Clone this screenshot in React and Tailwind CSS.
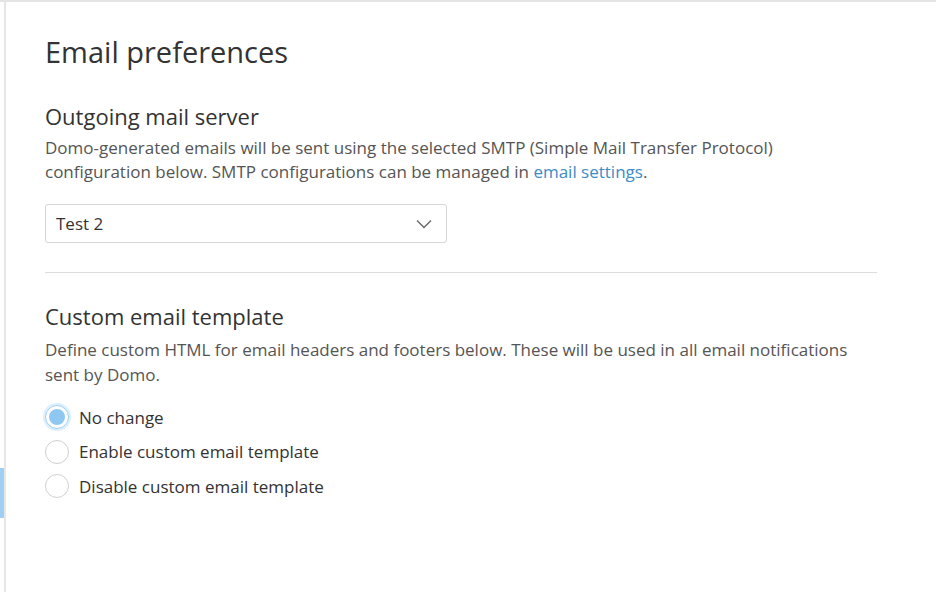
import React, { useState } from "react";

const options = [
  { id: "none", label: "No change" },
  { id: "enable", label: "Enable custom email template" },
  { id: "disable", label: "Disable custom email template" },
];

const Radio = ({ checked, label, onSelect }) => (
  <label
    className="flex items-center gap-[10px] h-[34.5px] cursor-pointer"
    onClick={onSelect}
  >
    {checked ? (
      <span className="w-[24px] h-[24px] rounded-full border border-[#9fd0f3] bg-white shadow-[0_0_0_2px_#dcefff] flex items-center justify-center">
        <span className="w-[16px] h-[16px] rounded-full bg-[#8ec8f0]" />
      </span>
    ) : (
      <span className="w-[24px] h-[24px] rounded-full border border-[#cfcfcf] bg-white" />
    )}
    <span className="text-[17px] text-[#333]">{label}</span>
  </label>
);

export default function App() {
  const [choice, setChoice] = useState("none");

  return (
    <div
      className="w-[936px] h-[592px] bg-white flex border-t-2 border-[#e4e4e4] overflow-hidden"
      style={{ fontFamily: '"Open Sans", sans-serif' }}
    >
      {/* left rail with active marker */}
      <div className="w-[4px] flex flex-col">
        <div className="h-[466px]" />
        <div className="h-[50px] bg-[#9fd0f3]" />
      </div>
      <div className="flex-1 border-l-2 border-[#e6e6e6] pl-[39px] pt-[31px]">
        <h1 className="text-[29px] leading-[38px] text-[#333]">Email preferences</h1>

        <h2 className="mt-[30px] text-[22px] leading-[30px] text-[#333]">
          Outgoing mail server
        </h2>
        <p className="mt-[5px] text-[17px] leading-[24px] text-[#555] w-[800px]">
          Domo-generated emails will be sent using the selected SMTP (Simple Mail Transfer
          Protocol) configuration below. SMTP configurations can be managed in{" "}
          <span className="text-[#3d8bc7] cursor-pointer">email settings</span>.
        </p>

        <button className="mt-[20px] w-[402px] h-[39px] border border-[#d6d6d6] rounded-[3px] flex items-center justify-between pl-[10px] pr-[14px] text-[17px] text-[#333]">
          <span>Test 2</span>
          <svg width="16" height="10" viewBox="0 0 16 10" fill="none">
            <path d="M1 1.5l7 7 7-7" stroke="#666" strokeWidth="1.3" />
          </svg>
        </button>

        <div className="mt-[29px] w-[832px] border-t border-[#dcdcdc]" />

        <h2 className="mt-[28px] text-[22px] leading-[30px] text-[#333]">
          Custom email template
        </h2>
        <p className="mt-[6px] text-[17px] leading-[25px] text-[#555] w-[820px]">
          Define custom HTML for email headers and footers below. These will be used in all
          email notifications sent by Domo.
        </p>

        <div className="mt-[13px] flex flex-col">
          {options.map((o) => (
            <Radio
              key={o.id}
              label={o.label}
              checked={choice === o.id}
              onSelect={() => setChoice(o.id)}
            />
          ))}
        </div>
      </div>
    </div>
  );
}
